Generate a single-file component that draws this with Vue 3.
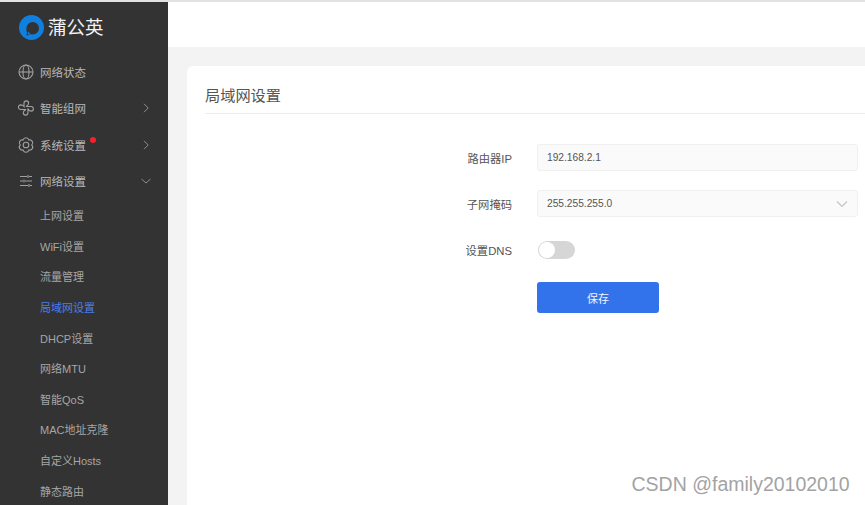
<script setup>
const menus = [
  { label: '网络状态', icon: 'globe' },
  { label: '智能组网', icon: 'mesh', arrow: 'right' },
  { label: '系统设置', icon: 'gear', arrow: 'right', dot: true },
  { label: '网络设置', icon: 'sliders', arrow: 'down' },
]
const subs = ['上网设置', 'WiFi设置', '流量管理', '局域网设置', 'DHCP设置', '网络MTU', '智能QoS', 'MAC地址克隆', '自定义Hosts', '静态路由']
</script>

<template>
  <div class="page">
    <aside class="side">
      <div class="logo">
        <svg class="logo-mark" width="25" height="25" viewBox="0 0 25 25">
          <circle cx="12.5" cy="12.5" r="12.5" fill="#0f7fe0" />
          <path d="M13.800 7a6.300 6.300 0 0 1 6.200 6.400 6.300 6.300 0 0 1-6.200 6.100c-1.500 0-2.800-.2-3.800-.1-.8.100-1.600.7-2.200 1.400-.3-1.300-.1-2.400.3-3.200A6.500 6.500 0 0 1 7.500 13.200 6.300 6.300 0 0 1 13.800 7z" fill="#333" />
          <path d="M9.700 16.500c.7.700 1.100 1.500 1 2.600l-1.800.5c-.2-1 .1-2.200.8-3.100z" fill="#0f7fe0" />
        </svg>
        <span class="logo-text">蒲公英</span>
      </div>
      <nav class="menu">
        <div v-for="m in menus" :key="m.label" class="item">
          <svg class="ico" width="18" height="18" viewBox="0 0 18 18" fill="none" stroke="#a0a0a0" stroke-width="1.100">
            <template v-if="m.icon === 'globe'">
              <circle cx="9" cy="9" r="7" />
              <ellipse cx="9" cy="9" rx="3" ry="7" />
              <path d="M2 9h14" />
            </template>
            <template v-else-if="m.icon === 'mesh'">
              <path d="M7 7.500V4.200a2.300 2.300 0 0 1 4.600 0c0 1.600-1 2.600-2.600 3.300h5a2.300 2.300 0 0 1 .2 4.600c-1.600 0-2.700-1-3.300-2.600v4.300a2.300 2.300 0 0 1-4.600 0c0-1.600 1-2.600 2.700-3.300H3.800a2.300 2.300 0 0 1-.2-4.600C5.300 5.900 6.400 6.700 7 7.500z" />
            </template>
            <template v-else-if="m.icon === 'gear'">
              <path d="M14.800 9A3 3 0 0 1 11.900 14.020 3 3 0 0 1 6.100 14.020 3 3 0 0 1 3.200 9 3 3 0 0 1 6.100 3.980 3 3 0 0 1 11.900 3.980 3 3 0 0 1 14.800 9z" />
              <circle cx="9" cy="9" r="2.800" />
            </template>
            <template v-else>
              <path d="M3 4.500h7M12 4.500h3M3 9h3M8 9h7M3 13.500h8M13 13.500h2" />
              <path d="M11 3v3M7 7.500v3M12 12v3" />
            </template>
          </svg>
          <span class="label">{{ m.label }}</span>
          <i v-if="m.dot" class="dot"></i>
          <svg v-if="m.arrow === 'right'" class="arrow" width="10" height="10" viewBox="0 0 10 10" fill="none" stroke="#8f8f8f" stroke-width="1">
            <path d="M3 .8L7.200 5 3 9.200" />
          </svg>
          <svg v-if="m.arrow === 'down'" class="arrow" width="10" height="10" viewBox="0 0 10 10" fill="none" stroke="#8f8f8f" stroke-width="1">
            <path d="M.5 3l4.500 4 4.500-4" />
          </svg>
        </div>
      </nav>
      <div class="subs">
        <div v-for="s in subs" :key="s" class="sub" :class="{ active: s === '局域网设置' }">{{ s }}</div>
      </div>
    </aside>

    <main class="main">
      <header class="top"></header>
      <div class="content">
        <section class="card">
          <h1 class="title">局域网设置</h1>
          <form class="form" @submit.prevent>
            <div class="row">
              <label class="lab">路由器IP</label>
              <div class="field">192.168.2.1</div>
            </div>
            <div class="row">
              <label class="lab">子网掩码</label>
              <div class="field">
                255.255.255.0
                <svg class="caret" width="12" height="8" viewBox="0 0 12 8" fill="none" stroke="#c4c4c4" stroke-width="1.100">
                  <path d="M1 1.500l5 5 5-5" />
                </svg>
              </div>
            </div>
            <div class="row switch-row">
              <label class="lab">设置DNS</label>
              <div class="switch"><span class="knob"></span></div>
            </div>
            <div class="row btn-row">
              <button class="save" type="button">保存</button>
            </div>
          </form>
          <div class="mark">CSDN @family20102010</div>
        </section>
      </div>
    </main>
  </div>
</template>

<style>
html, body { margin: 0; padding: 0; background: #fff; overflow: hidden; }
</style>

<style scoped>
.page {
  width: 865px;
  height: 505px;
  display: flex;
  overflow: hidden;
  box-sizing: border-box;
  border-top: 2px solid #e2e2e2;
  font-family: "Liberation Sans", "Noto Sans CJK SC", sans-serif;
}
.side {
  width: 168px;
  flex: none;
  background: #333;
  color: #b4b4b4;
}
.logo {
  height: 51px;
  display: flex;
  align-items: center;
  padding-left: 19px;
  box-sizing: border-box;
}
.logo-mark { flex: none; }
.logo-text {
  margin-left: 4px;
  font-size: 18.500px;
  line-height: 22px;
  margin-top: 0;
  color: #f2f2f2;
}
.menu { display: flex; flex-direction: column; padding-top: 1px; }
.item {
  height: 36.300px;
  display: flex;
  align-items: center;
  padding-left: 17px;
  position: relative;
  font-size: 11.500px;
}
.ico { flex: none; margin-right: 5px; }
.label { color: #b8b8b8; }
.dot {
  position: absolute;
  left: 90px;
  top: 10px;
  width: 6px;
  height: 6px;
  border-radius: 50%;
  background: #f5222d;
}
.arrow { position: absolute; left: 141px; top: 13px; }
.subs { padding-top: 2px; }
.sub {
  height: 30.600px;
  line-height: 30.600px;
  padding-left: 40px;
  font-size: 11px;
  color: #a6a6a6;
  white-space: nowrap;
}
.sub.active { color: #4b7fe8; }
.main {
  flex: 1;
  min-width: 0;
  display: flex;
  flex-direction: column;
}
.top { height: 45px; background: #fff; flex: none; }
.content {
  flex: 1;
  background: #f3f3f3;
  padding: 19px 0 0 18.500px;
  min-height: 0;
}
.card {
  background: #fff;
  border-radius: 6px 0 0 0;
  height: 100%;
  box-sizing: border-box;
  padding-left: 18.500px;
  position: relative;
}
.title {
  margin: 0;
  height: 48px;
  line-height: 60px;
  box-sizing: border-box;
  font-size: 15.200px;
  font-weight: 400;
  color: #555;
  border-bottom: 1px solid #ececec;
}
.form {
  padding-top: 30px;
  display: flex;
  flex-direction: column;
}
.row {
  display: flex;
  align-items: center;
  height: 27px;
  margin-bottom: 19px;
}
.lab {
  width: 307px;
  flex: none;
  text-align: right;
  font-size: 11.300px;
  color: #555;
}
.field {
  width: 321px;
  height: 27px;
  margin-left: 25px;
  box-sizing: border-box;
  border: 1px solid #f0f0f0;
  border-radius: 3px;
  background: #fafafa;
  padding-left: 9px;
  line-height: 25px;
  font-size: 10.200px;
  color: #555;
  position: relative;
}
.caret { position: absolute; right: 9px; top: 9px; }
.switch-row { height: 18px; margin-top: 5px; margin-bottom: 23px; }
.switch {
  width: 37px;
  height: 18px;
  margin-left: 26px;
  border-radius: 9px;
  background: #d6d6d6;
  position: relative;
}
.knob {
  position: absolute;
  left: 1px;
  top: 1px;
  width: 16px;
  height: 16px;
  border-radius: 50%;
  background: #fff;
}
.btn-row { height: 31px; margin: 0; }
.save {
  margin-left: 332px;
  width: 122px;
  height: 31px;
  border: 0;
  border-radius: 3px;
  background: #3273ec;
  color: #f3f6fd;
  font: inherit;
  font-size: 11px;
  padding: 0;
}
.mark {
  position: absolute;
  left: 445px;
  top: 407px;
  font-size: 19.500px;
  color: #a3a3a3;
  white-space: nowrap;
  font-family: "Liberation Sans", sans-serif;
}
</style>
